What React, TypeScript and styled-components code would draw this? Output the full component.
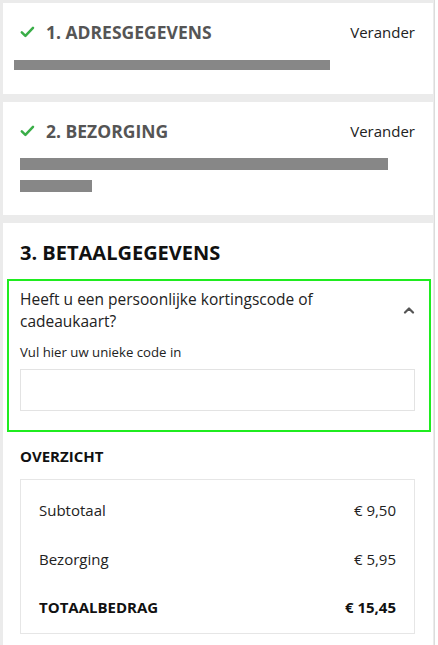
import styled, { createGlobalStyle } from 'styled-components';

const GlobalStyle = createGlobalStyle`
  html, body {
    margin: 0;
    padding: 0;
    background: #ffffff;
  }
  body {
    font-family: 'Open Sans', 'Liberation Sans', sans-serif;
    color: #222;
  }
  * {
    box-sizing: border-box;
  }
`;

const Page = styled.div`
  width: 435px;
  min-height: 645px;
  padding: 3px 0 0 3px;
  background: #ebebeb;
  border-right: 1px solid #dcdcdc;
  display: flex;
  flex-direction: column;
  gap: 8px;
`;

const Card = styled.section<{ $bottom?: number; $grow?: boolean }>`
  background: #fff;
  margin-right: 1px;
  padding: 16.5px 18px ${(p) => p.$bottom ?? 23}px 17px;
  flex: ${(p) => (p.$grow ? 1 : 'none')};
`;

const StepHead = styled.div`
  display: flex;
  align-items: baseline;
  justify-content: space-between;
`;

const StepTitle = styled.h2<{ $done?: boolean }>`
  margin: 0;
  display: flex;
  align-items: center;
  gap: 11px;
  font-size: ${(p) => (p.$done ? 17.5 : 20)}px;
  line-height: ${(p) => (p.$done ? 24 : 26)}px;
  font-weight: 700;
  color: ${(p) => (p.$done ? '#555' : '#111')};
`;

const Change = styled.a`
  font-size: 15px;
  line-height: 20px;
  color: #222;
  text-decoration: none;
`;

const Redacted = styled.div<{ $w: number; $h: number; $shift?: number }>`
  width: ${(p) => p.$w}px;
  height: ${(p) => p.$h}px;
  margin-left: ${(p) => p.$shift ?? 0}px;
  background: #878787;
`;

const RedactStack = styled.div<{ $top: number }>`
  margin-top: ${(p) => p.$top}px;
  display: flex;
  flex-direction: column;
  gap: 10px;
`;

const Highlight = styled.div`
  margin: 13.5px -16px 0 -13px;
  border: 2px solid #1fec1f;
  padding: 7px 14px 19px 11px;
`;

const AccordionHead = styled.div`
  display: flex;
  align-items: center;
  justify-content: space-between;
`;

const AccordionTitle = styled.p`
  margin: 0;
  width: 372px;
  font-size: 15.5px;
  line-height: 22px;
  color: #222;
`;

const Label = styled.label`
  display: block;
  margin-top: 11px;
  font-size: 13.2px;
  line-height: 18px;
  color: #222;
`;

const CodeInput = styled.input`
  display: block;
  width: 100%;
  height: 42px;
  margin-top: 8px;
  border: 1px solid #e3e3e3;
  background: #fff;
  font-family: inherit;
  font-size: 14px;
  padding: 0 12px;
  outline: none;
`;

const Overview = styled.h3`
  margin: 14px 0 0;
  font-size: 15px;
  line-height: 20px;
  font-weight: 700;
  color: #111;
`;

const Summary = styled.div`
  margin-top: 13px;
  border: 1px solid #e6e6e6;
  padding: 20px 18px 16px;
  display: flex;
  flex-direction: column;
  gap: 28.5px;
`;

const SumRow = styled.div<{ $total?: boolean }>`
  display: flex;
  justify-content: space-between;
  font-size: 15px;
  line-height: 20px;
  font-weight: ${(p) => (p.$total ? 700 : 400)};
  color: ${(p) => (p.$total ? '#111' : '#222')};
`;

const Check = () => (
  <svg width="15" height="12" viewBox="0 0 15 12">
    <path d="M1.8 6.3 L5.4 9.8 L13 1.8" fill="none" stroke="#3aae48" strokeWidth="2.5" strokeLinecap="round" strokeLinejoin="round" />
  </svg>
);

const ChevronUp = () => (
  <svg width="12" height="8" viewBox="0 0 12 8">
    <path d="M2 6.5 L6 2.5 L10 6.5" fill="none" stroke="#555" strokeWidth="2.2" strokeLinecap="round" strokeLinejoin="round" />
  </svg>
);

const rows = [
  { label: 'Subtotaal', value: '€ 9,50' },
  { label: 'Bezorging', value: '€ 5,95' },
  { label: 'TOTAALBEDRAG', value: '€ 15,45', total: true },
];

export default function App() {
  return (
    <>
      <GlobalStyle />
      <Page>
        <Card $bottom={24}>
          <StepHead>
            <StepTitle $done>
              <Check />
              1. ADRESGEGEVENS
            </StepTitle>
            <Change>Verander</Change>
          </StepHead>
          <RedactStack $top={16.5}>
            <Redacted $w={316} $h={10} $shift={-6} />
          </RedactStack>
        </Card>

        <Card>
          <StepHead>
            <StepTitle $done>
              <Check />
              2. BEZORGING
            </StepTitle>
            <Change>Verander</Change>
          </StepHead>
          <RedactStack $top={15.5}>
            <Redacted $w={368} $h={12} />
            <Redacted $w={72} $h={12} />
          </RedactStack>
        </Card>

        <Card $grow $bottom={12}>
          <StepTitle>3. BETAALGEGEVENS</StepTitle>
          <Highlight>
            <AccordionHead>
              <AccordionTitle>Heeft u een persoonlijke kortingscode of cadeaukaart?</AccordionTitle>
              <ChevronUp />
            </AccordionHead>
            <Label htmlFor="code">Vul hier uw unieke code in</Label>
            <CodeInput id="code" type="text" />
          </Highlight>
          <Overview>OVERZICHT</Overview>
          <Summary>
            {rows.map((r) => (
              <SumRow key={r.label} $total={r.total}>
                <span>{r.label}</span>
                <span>{r.value}</span>
              </SumRow>
            ))}
          </Summary>
        </Card>
      </Page>
    </>
  );
}
